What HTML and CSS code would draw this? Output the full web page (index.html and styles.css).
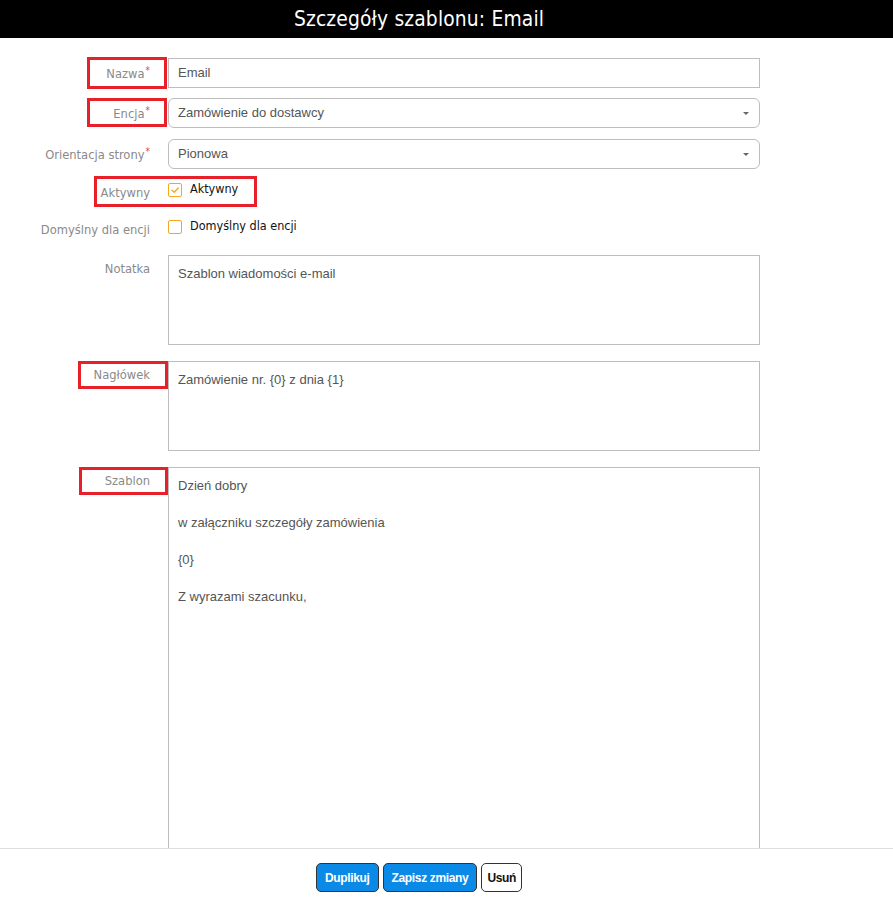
FILE: index.html
```html
<!DOCTYPE html>
<html lang="pl">
<head>
<meta charset="utf-8">
<title>Szczegóły szablonu: Email</title>
<link rel="stylesheet" href="styles.css">
</head>
<body>
<div class="page">
  <header class="topbar"><h1 class="title">Szczegóły szablonu: Email</h1></header>
  <main class="content">
    <form class="form">
      <div class="row row-input">
        <label class="lbl">Nazwa<span class="req">*</span></label>
        <div class="field input">Email</div>
      </div>
      <div class="row row-select">
        <label class="lbl">Encja<span class="req">*</span></label>
        <div class="field select">Zamówienie do dostawcy<span class="caret"></span></div>
      </div>
      <div class="row row-select2">
        <label class="lbl">Orientacja strony<span class="req">*</span></label>
        <div class="field select">Pionowa<span class="caret"></span></div>
      </div>
      <div class="row row-check">
        <label class="lbl lbl-check">Aktywny</label>
        <div class="check-wrap"><span class="box"><svg viewBox="0 0 14 14" width="14" height="14"><path d="M4 7.3 L6.2 9.3 L10.2 5" fill="none" stroke="#f5a623" stroke-width="1.4" stroke-linecap="round" stroke-linejoin="round"/></svg></span><span class="check-text">Aktywny</span></div>
      </div>
      <div class="row row-check2">
        <label class="lbl lbl-check">Domyślny dla encji</label>
        <div class="check-wrap"><span class="box"></span><span class="check-text">Domyślny dla encji</span></div>
      </div>
      <div class="row row-area">
        <label class="lbl lbl-area">Notatka</label>
        <div class="field area">Szablon wiadomości e-mail</div>
      </div>
      <div class="row row-area">
        <label class="lbl lbl-area">Nagłówek</label>
        <div class="field area">Zamówienie nr. {0} z dnia {1}</div>
      </div>
      <div class="row row-area">
        <label class="lbl lbl-area">Szablon</label>
        <div class="field area big">Dzień dobry<br><br>w załączniku szczegóły zamówienia<br><br>{0}<br><br>Z wyrazami szacunku,</div>
      </div>
    </form>
    <div class="mark m1"></div>
    <div class="mark m2"></div>
    <div class="mark m3"></div>
    <div class="mark m4"></div>
    <div class="mark m5"></div>
  </main>
  <footer class="footer">
    <button class="btn primary" type="button">Duplikuj</button>
    <button class="btn primary" type="button">Zapisz zmiany</button>
    <button class="btn plain" type="button">Usuń</button>
  </footer>
</div>
</body>
</html>
```
FILE: styles.css
```css
* { box-sizing: border-box; }
html, body { margin: 0; padding: 0; background: #fff; }
body { font-family: "Liberation Sans", Arial, sans-serif; }
.page { display: flex; flex-direction: column; height: 897px; overflow: hidden; }
.topbar { height: 38px; background: #000; display: flex; align-items: center; justify-content: center; flex: none; padding-right: 55px; }
.title { margin: 0; color: #fff; font-family: "DejaVu Sans Condensed", "DejaVu Sans", sans-serif; font-size: 20.8px; font-weight: normal; letter-spacing: 0.15px; line-height: 38px; }
.content { flex: 1; overflow: hidden; position: relative; }
.form { padding-top: 20px; display: flex; flex-direction: column; }
.row { display: grid; grid-template-columns: 150px 592px; column-gap: 18px; }
.row-input { margin-bottom: 10px; }
.row-select { margin-bottom: 11px; }
.row-select2 { margin-bottom: 14px; }
.row-check { height: 30px; margin-bottom: 7px; }
.row-check2 { height: 35px; }
.row-area { margin-bottom: 16px; }
.lbl { text-align: right; color: #8a8a8a; font-family: "DejaVu Sans Condensed", "DejaVu Sans", sans-serif; font-size: 12.8px; padding-top: 5px; line-height: 15px; white-space: nowrap; }
.req { color: #e8463b; font-size: 10px; vertical-align: 4px; margin-left: 1px; }
.field { border: 1px solid #bdbdbd; background: #fff; color: #555; font-size: 13px; }
.input { height: 30px; padding: 0 9px; line-height: 28px; }
.select { height: 30px; padding: 0 9px; line-height: 28px; border-radius: 6px; position: relative; }
.caret { position: absolute; right: 10px; top: 13px; width: 0; height: 0; border-left: 3.5px solid transparent; border-right: 3.5px solid transparent; border-top: 3.5px solid #666; }
.lbl-check { padding-top: 2px; }
.check-wrap { display: flex; align-items: flex-start; }
.box { width: 14px; height: 14px; border: 1.5px solid #f5a623; border-radius: 2px; display: flex; align-items: center; justify-content: center; flex: none; }
.box svg { display: block; margin: -1.5px; }
.check-text { color: #111; font-family: "DejaVu Sans Condensed", "DejaVu Sans", sans-serif; font-size: 12.5px; margin-left: 8px; line-height: 12px; }
.area { height: 90px; padding: 9px 9px; line-height: 18.5px; }
.lbl-area { padding-top: 6px; }
.big { height: 420px; }
.mark { position: absolute; border: 3px solid #e8202a; pointer-events: none; }
.m1 { left: 87px; top: 19px; width: 80px; height: 32px; }
.m2 { left: 87px; top: 60px; width: 80px; height: 29px; }
.m3 { left: 94px; top: 138px; width: 163px; height: 31px; }
.m4 { left: 78px; top: 323px; width: 90px; height: 28px; }
.m5 { left: 79px; top: 429px; width: 89px; height: 28px; }
.footer { flex: none; height: 49px; border-top: 1px solid #ddd; display: flex; justify-content: center; align-items: flex-start; gap: 4px; padding: 14px 55px 0 0; background: #fff; }
.btn { font-family: "Liberation Sans", Arial, sans-serif; font-size: 12px; font-weight: bold; letter-spacing: -0.35px; height: 29px; padding: 0 8px; border-radius: 5px; border: 1px solid #333; cursor: pointer; }
.primary { background: #0a8ae6; color: #fff; }
.plain { background: #fff; color: #111; padding: 0 5px; }
```
